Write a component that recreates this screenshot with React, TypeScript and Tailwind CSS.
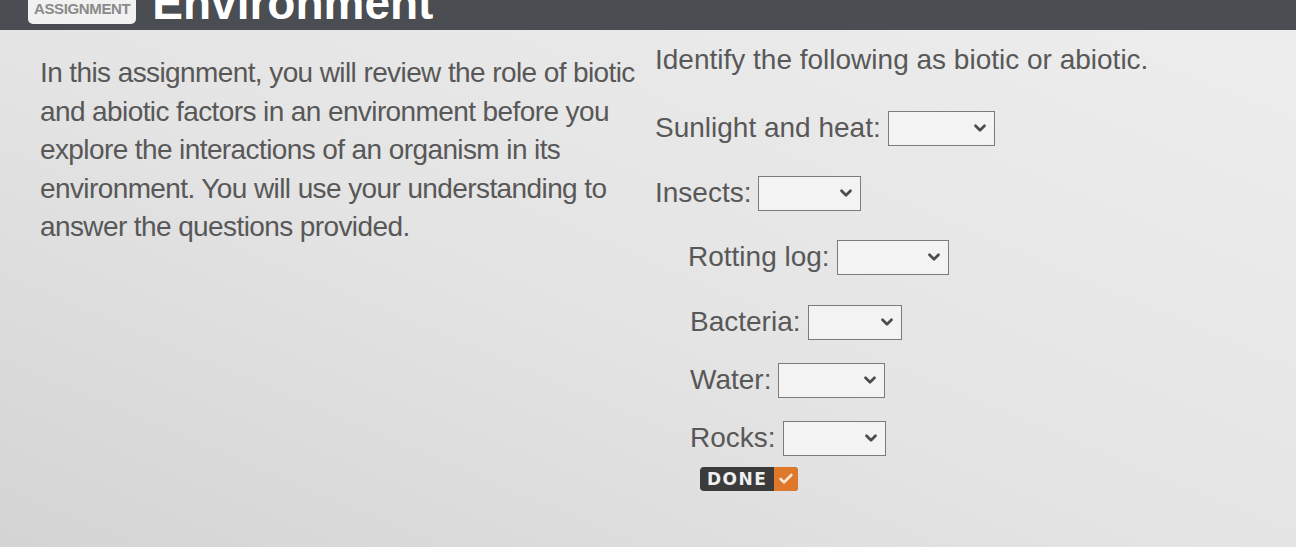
import { ChevronDown, Check } from "lucide-react"

const intro = [
    "In this assignment, you will review the role of biotic",
    "and abiotic factors in an environment before you",
    "explore the interactions of an organism in its",
    "environment. You will use your understanding to",
    "answer the questions provided.",
]

const items = [
    { label: "Sunlight and heat:", row: "mt-[31px] ml-0", box: "w-[107px]" },
    { label: "Insects:", row: "mt-[29px] ml-0", box: "w-[103px]" },
    { label: "Rotting log:", row: "mt-[28px] ml-[33px]", box: "w-[112px]" },
    { label: "Bacteria:", row: "mt-[29px] ml-[35px]", box: "w-[94px]" },
    { label: "Water:", row: "mt-[22px] ml-[35px]", box: "w-[107px]" },
    { label: "Rocks:", row: "mt-[22px] ml-[35px]", box: "w-[103px]" },
]

const Select = ({ width }: { width: string }) => (
    <div className={`${width} h-[35px] border-[1.5px] border-[#7b7b7b] bg-[#f3f3f3] flex items-center justify-end pr-[5px]`}>
        <ChevronDown size={18} strokeWidth={3.6} className="text-[#4c4c4c]" />
    </div>
)

export default function App() {
    return (
        <div className="min-h-[547px] w-full bg-[linear-gradient(to_top_right,#d4d4d4,#e4e4e4_45%,#eeeeee)] font-['Liberation_Sans',Arial,sans-serif] text-[#585858] overflow-hidden">
            <header className="h-[30px] bg-[#4a4d52] overflow-hidden flex items-end px-[28px] gap-[16px]">
                <span className="mb-[6px] bg-[#f1f1f1] text-[#8a8a8a] rounded-[5px] px-[6px] text-[15px] font-bold leading-[30px] tracking-tight">
                    ASSIGNMENT
                </span>
                <span className="mb-[4px] text-white font-bold text-[46px] leading-[46px]">Environment</span>
            </header>

            <main className="flex">
                <section className="w-[615px] pl-[40px] pt-[24px] text-[28px] leading-[38.5px] tracking-[-0.6px] whitespace-nowrap">
                    {intro.map((line) => (
                        <div key={line}>{line}</div>
                    ))}
                </section>

                <section className="pl-[40px] pt-[11px] flex flex-col items-start text-[28px] tracking-[0px] whitespace-nowrap">
                    <h2 className="leading-[38px]">Identify the following as biotic or abiotic.</h2>

                    {items.map((item) => (
                        <div key={item.label} className={`${item.row} flex items-center gap-[7px] h-[36px]`}>
                            <span>{item.label}</span>
                            <Select width={item.box} />
                        </div>
                    ))}

                    <button className="mt-[11px] ml-[45px] h-[24px] flex items-stretch rounded-[4px] overflow-hidden bg-[#3b3b3b]">
                        <span className="px-[7px] text-[#f0f0f0] font-bold text-[17px] tracking-[1.5px] leading-[24px] font-['DejaVu_Sans',sans-serif]">
                            DONE
                        </span>
                        <span className="w-[24px] bg-[#e0782c] flex items-center justify-center">
                            <Check size={16} strokeWidth={4} className="text-[#fbe9dc]" />
                        </span>
                    </button>
                </section>
            </main>
        </div>
    )
}
